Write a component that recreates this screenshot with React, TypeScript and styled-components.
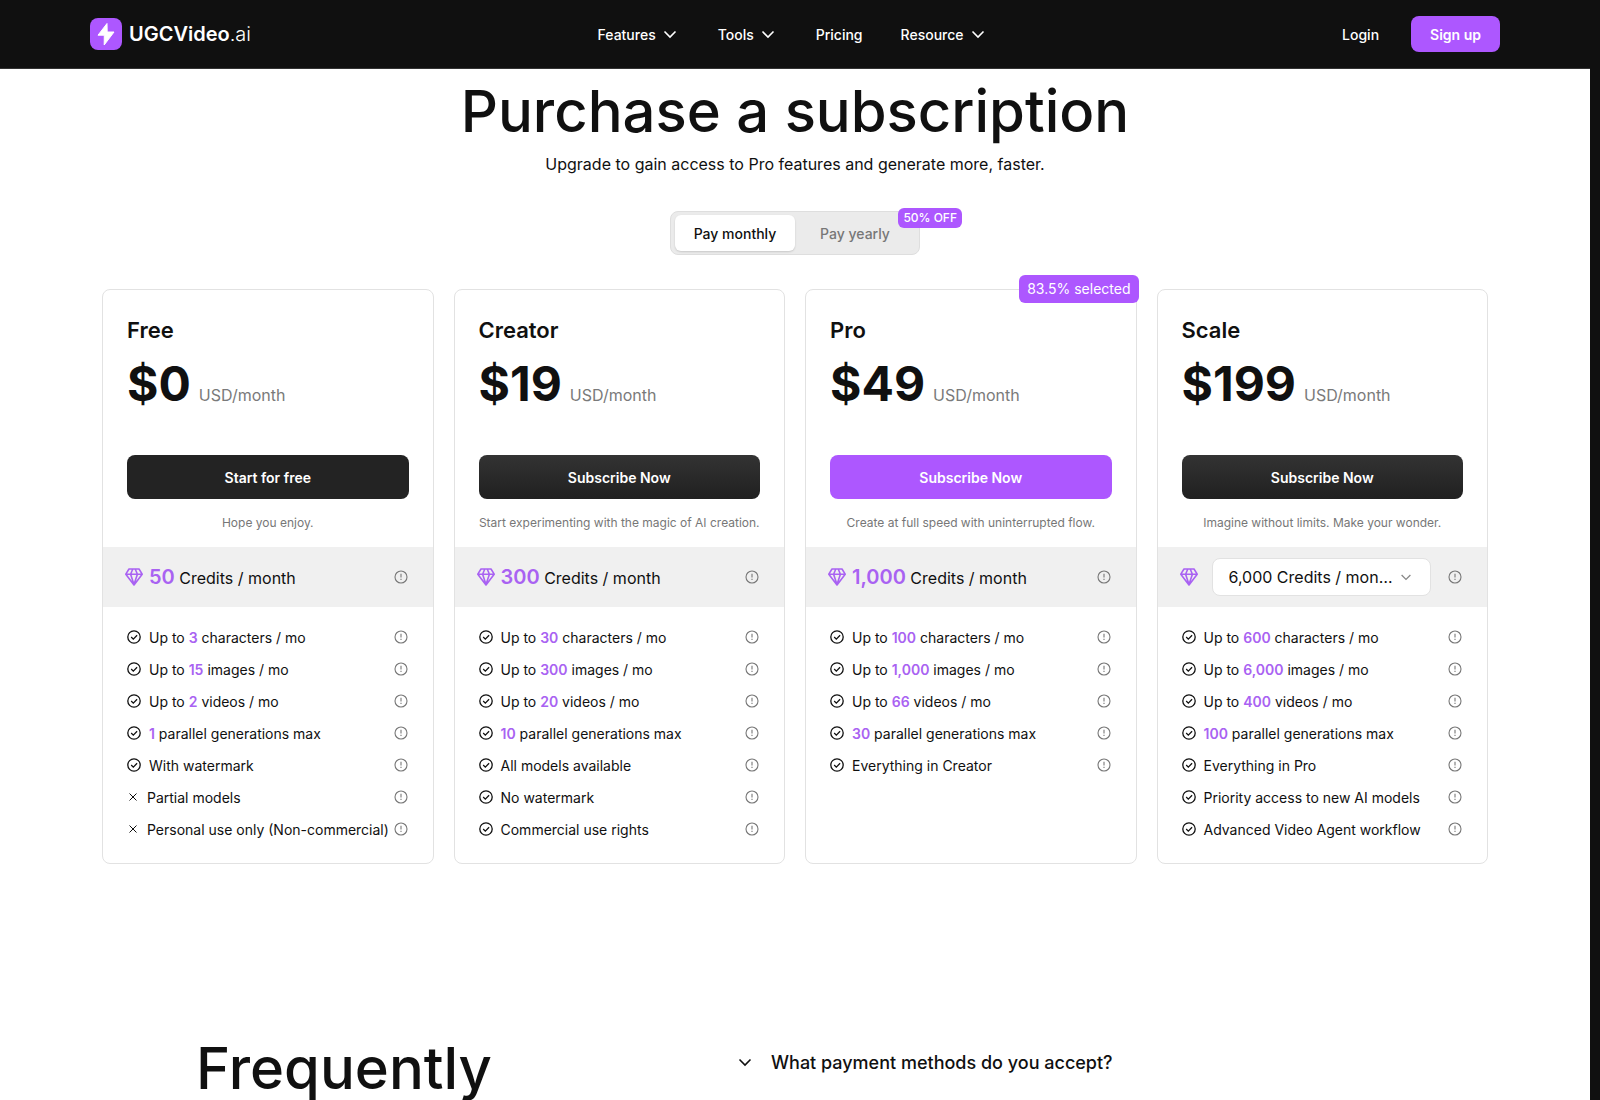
import React from "react";
import styled, { createGlobalStyle, css } from "styled-components";

const PURPLE = "#ad57ff";
const INK = "#101010";

const GlobalStyle = createGlobalStyle`
  *, *::before, *::after { box-sizing: border-box; }
  body {
    margin: 0;
    background: #101010;
    color: ${INK};
    font-family: Inter, "Liberation Sans", sans-serif;
    font-size: 14px;
  }
  button, select { font: inherit; color: inherit; }
  h1, h2, h3, p, ul { margin: 0; padding: 0; }
  svg { flex-shrink: 0; }
`;

const Shell = styled.div`
  height: 100vh;
  overflow: hidden;
  background: #fff;
  border-right: 10px solid #101010;
`;

const Header = styled.header`
  display: flex;
  align-items: center;
  justify-content: space-between;
  height: 69px;
  padding: 0 90px;
  background: #101010;
  border-bottom: 1px solid #333;
  color: #fff;
  font-size: 14px;
  font-weight: 500;
`;

const Logo = styled.a`
  display: flex;
  align-items: center;
  gap: 7px;
  color: #fff;
  text-decoration: none;
  font-size: 20px;
  font-weight: 600;
`;

const LogoSuffix = styled.span`
  font-weight: 300;
`;

const Nav = styled.nav`
  display: flex;
  align-items: center;
  gap: 38px;
`;

const NavLink = styled.a`
  color: #fff;
  text-decoration: none;
`;

const NavButton = styled.button`
  display: flex;
  align-items: center;
  gap: 4px;
  padding: 0;
  border: 0;
  background: none;
`;

const Account = styled.div`
  display: flex;
  align-items: center;
  gap: 32px;
  padding-left: 8px;
`;

const SignUp = styled.button`
  height: 36px;
  padding: 0 19px;
  border: 0;
  border-radius: 8px;
  background: ${PURPLE};
  font-weight: 600;
`;

const Intro = styled.section`
  display: flex;
  flex-direction: column;
  align-items: center;
  padding-top: 12px;
`;

const Title = styled.h1`
  font-size: 58px;
  line-height: 60px;
  font-weight: 500;
`;

const Subtitle = styled.p`
  margin-top: 11px;
  font-size: 16px;
  line-height: 24px;
`;

const Toggle = styled.div`
  position: relative;
  display: flex;
  margin-top: 35px;
  padding: 3px 4px;
  border: 1px solid #dedede;
  border-radius: 8px;
  background: #ebebeb;
`;

const ToggleButton = styled.button<{ $active?: boolean }>`
  width: 120px;
  height: 36px;
  border: 0;
  border-radius: 6px;
  background: none;
  color: #777;
  font-weight: 500;
  ${(p) =>
    p.$active &&
    css`
      background: #fff;
      color: ${INK};
      box-shadow: 0 1px 2px rgba(0, 0, 0, 0.15);
    `}
`;

const Discount = styled.span`
  position: absolute;
  top: -4px;
  right: -43px;
  padding: 0 5px;
  border-radius: 6px;
  background: ${PURPLE};
  color: #fff;
  font-size: 12px;
  line-height: 20px;
  font-weight: 500;
`;

const Plans = styled.section`
  display: grid;
  grid-template-columns: repeat(4, minmax(0, 1fr));
  gap: 20px;
  padding: 34px 102px 0;
`;

const Card = styled.article`
  position: relative;
  padding-bottom: 18px;
  border: 1px solid #e2e2e2;
  border-radius: 8px;
`;

const Popular = styled.span`
  position: absolute;
  top: -15px;
  right: -3px;
  padding: 0 8px;
  border-radius: 6px;
  background: ${PURPLE};
  color: #fff;
  font-size: 14px;
  line-height: 28px;
`;

const CardHead = styled.div`
  padding: 24px 24px 0;
`;

const PlanName = styled.h3`
  font-size: 22px;
  line-height: 32px;
  font-weight: 600;
`;

const Price = styled.p`
  display: flex;
  align-items: baseline;
  gap: 8px;
  margin-top: 8px;
  color: #7a7a7a;
  font-size: 16px;
  line-height: 60px;
`;

const Amount = styled.strong`
  color: ${INK};
  font-size: 48px;
  font-weight: 700;
`;

const Subscribe = styled.button<{ $tone: Tone }>`
  display: block;
  width: 100%;
  height: 44px;
  margin-top: 30px;
  border: 0;
  border-radius: 8px;
  color: #fff;
  font-weight: 600;
  background: ${(p) =>
    p.$tone === "purple" ? PURPLE : p.$tone === "flat" ? "#232323" : "linear-gradient(#333, #202020)"};
`;

const Note = styled.p`
  padding: 16px 0;
  color: #777;
  font-size: 12px;
  line-height: 16px;
  text-align: center;
`;

const Credits = styled.div`
  display: flex;
  align-items: center;
  gap: 6px;
  height: 60px;
  padding: 0 24px 0 22px;
  background: #f0f0f0;
`;

const CreditsText = styled.p`
  flex: 1;
  font-size: 16px;
`;

const CreditsCount = styled.strong`
  color: #a962f2;
  font-size: 20px;
  font-weight: 600;
`;

const SelectBox = styled.div`
  display: grid;
  grid-template-columns: 1fr 33px;
  align-items: center;
  flex: 1;
  margin: 0 10px 0 8px;
`;

const Select = styled.select`
  grid-area: 1 / 1 / 2 / 3;
  width: 100%;
  height: 38px;
  padding: 0 34px 0 16px;
  border: 1px solid #e2e2e2;
  border-radius: 8px;
  background: #fff;
  appearance: none;
  font-size: 16px;
  text-overflow: ellipsis;
  overflow: hidden;
  white-space: nowrap;
`;

const SelectArrow = styled.span`
  grid-area: 1 / 2;
  display: flex;
  z-index: 1;
  color: #888;
  pointer-events: none;
`;

const Features = styled.ul`
  padding: 14px 24px 0;
  list-style: none;
`;

const Feature = styled.li`
  display: flex;
  align-items: center;
  gap: 8px;
  height: 32px;
`;

const FeatureText = styled.span`
  flex: 1;
  min-width: 0;
  white-space: nowrap;
`;

const Count = styled.strong`
  color: #a962f2;
  font-weight: 600;
`;

const InfoButton = styled.button`
  display: flex;
  padding: 0;
  border: 0;
  background: none;
  color: #777;
`;

const Faq = styled.section`
  display: grid;
  grid-template-columns: 539px 1fr;
  padding: 174px 196px 0;
`;

const FaqTitle = styled.h2`
  font-size: 58px;
  line-height: 60px;
  font-weight: 500;
`;

const Question = styled.button`
  display: flex;
  align-items: center;
  gap: 16px;
  height: 48px;
  padding: 0;
  border: 0;
  background: none;
  font-size: 18px;
  font-weight: 500;
`;

const Chevron = ({ size = 20 }: { size?: number }) => (
  <svg width={size} height={size} viewBox="0 0 20 20" fill="none" stroke="currentColor" strokeWidth="1.6" aria-hidden="true">
    <path d="M4.500 7.500 10 13l5.500-5.500" />
  </svg>
);

const Bolt = () => (
  <svg width="32" height="32" viewBox="0 0 32 32" aria-hidden="true">
    <rect width="32" height="32" rx="8" fill={PURPLE} />
    <path d="M17 5.500 8 17.200h6.300L14.200 27 24 14h-6.800z" fill="#fff" stroke="#fff" strokeWidth="1" strokeLinejoin="round" />
  </svg>
);

const Diamond = () => (
  <svg width="18" height="18" viewBox="0 0 18 18" fill="none" stroke="#a962f2" strokeWidth="1.6" strokeLinejoin="round" aria-hidden="true">
    <path d="M4 1h10l3.200 5.200L9 17 .8 6.200zM.8 6.200h16.400M7.800 1 5.600 6.200 9 16.500l3.400-10.300L10.200 1" />
  </svg>
);

const Check = () => (
  <svg width="14" height="14" viewBox="0 0 14 14" fill="none" stroke={INK} strokeWidth="1.3" aria-hidden="true">
    <circle cx="7" cy="7" r="6.200" />
    <path d="m4.200 7 2.100 2.100 3.800-3.800" />
  </svg>
);

const Cross = () => (
  <svg width="12" height="12" viewBox="0 0 12 12" stroke={INK} strokeWidth="1" aria-hidden="true">
    <path d="m2.500 2.500 7 7m0-7-7 7" />
  </svg>
);

const Info = () => (
  <InfoButton aria-label="More information">
    <svg width="16" height="16" viewBox="0 0 16 16" fill="none" stroke="currentColor" strokeWidth="1.1" aria-hidden="true">
      <circle cx="8" cy="8" r="6" />
      <path d="M8 4.800v3.700M8 9.800v1.200" />
    </svg>
  </InfoButton>
);

type Tone = "flat" | "dark" | "purple";

interface Line {
  before?: string;
  count?: string;
  after?: string;
  excluded?: boolean;
}

interface Plan {
  name: string;
  price: string;
  action: string;
  tone: Tone;
  note: string;
  credits: string;
  selectable?: boolean;
  badge?: string;
  lines: Line[];
}

const quotas = (characters: string, images: string, videos: string, parallel: string): Line[] => [
  { before: "Up to ", count: characters, after: " characters / mo" },
  { before: "Up to ", count: images, after: " images / mo" },
  { before: "Up to ", count: videos, after: " videos / mo" },
  { count: parallel, after: " parallel generations max" },
];

const plans: Plan[] = [
  {
    name: "Free",
    price: "$0",
    action: "Start for free",
    tone: "flat",
    note: "Hope you enjoy.",
    credits: "50",
    lines: [
      ...quotas("3", "15", "2", "1"),
      { after: "With watermark" },
      { after: "Partial models", excluded: true },
      { after: "Personal use only (Non-commercial)", excluded: true },
    ],
  },
  {
    name: "Creator",
    price: "$19",
    action: "Subscribe Now",
    tone: "dark",
    note: "Start experimenting with the magic of AI creation.",
    credits: "300",
    lines: [
      ...quotas("30", "300", "20", "10"),
      { after: "All models available" },
      { after: "No watermark" },
      { after: "Commercial use rights" },
    ],
  },
  {
    name: "Pro",
    price: "$49",
    action: "Subscribe Now",
    tone: "purple",
    note: "Create at full speed with uninterrupted flow.",
    credits: "1,000",
    badge: "83.5% selected",
    lines: [...quotas("100", "1,000", "66", "30"), { after: "Everything in Creator" }],
  },
  {
    name: "Scale",
    price: "$199",
    action: "Subscribe Now",
    tone: "dark",
    note: "Imagine without limits. Make your wonder.",
    credits: "6,000",
    selectable: true,
    lines: [
      ...quotas("600", "6,000", "400", "100"),
      { after: "Everything in Pro" },
      { after: "Priority access to new AI models" },
      { after: "Advanced Video Agent workflow" },
    ],
  },
];

const PlanCard = ({ plan }: { plan: Plan }) => (
  <Card>
    {plan.badge && <Popular>{plan.badge}</Popular>}
    <CardHead>
      <PlanName>{plan.name}</PlanName>
      <Price>
        <Amount>{plan.price}</Amount>
        <span>USD/month</span>
      </Price>
      <Subscribe $tone={plan.tone}>{plan.action}</Subscribe>
      <Note>{plan.note}</Note>
    </CardHead>
    <Credits>
      <Diamond />
      {plan.selectable ? (
        <SelectBox>
          <Select aria-label="Credits per month">
            <option>{`${plan.credits} Credits / mon…`}</option>
          </Select>
          <SelectArrow>
            <Chevron size={16} />
          </SelectArrow>
        </SelectBox>
      ) : (
        <CreditsText>
          <CreditsCount>{plan.credits}</CreditsCount> Credits / month
        </CreditsText>
      )}
      <Info />
    </Credits>
    <Features>
      {plan.lines.map((line, i) => (
        <Feature key={i}>
          {line.excluded ? <Cross /> : <Check />}
          <FeatureText>
            {line.before}
            {line.count && <Count>{line.count}</Count>}
            {line.after}
          </FeatureText>
          <Info />
        </Feature>
      ))}
    </Features>
  </Card>
);

export default function App() {
  const [yearly, setYearly] = React.useState(false);
  return (
    <Shell>
      <GlobalStyle />
      <Header>
        <Logo href="#">
          <Bolt />
          <span>
            UGCVideo<LogoSuffix>.ai</LogoSuffix>
          </span>
        </Logo>
        <Nav>
          <NavButton>Features <Chevron /></NavButton>
          <NavButton>Tools <Chevron /></NavButton>
          <NavLink href="#">Pricing</NavLink>
          <NavButton>Resource <Chevron /></NavButton>
        </Nav>
        <Account>
          <NavLink href="#">Login</NavLink>
          <SignUp>Sign up</SignUp>
        </Account>
      </Header>
      <main>
        <Intro>
          <Title>Purchase a subscription</Title>
          <Subtitle>Upgrade to gain access to Pro features and generate more, faster.</Subtitle>
          <Toggle>
            <ToggleButton $active={!yearly} onClick={() => setYearly(false)}>Pay monthly</ToggleButton>
            <ToggleButton $active={yearly} onClick={() => setYearly(true)}>Pay yearly</ToggleButton>
            <Discount>50% OFF</Discount>
          </Toggle>
        </Intro>
        <Plans>
          {plans.map((plan) => (
            <PlanCard key={plan.name} plan={plan} />
          ))}
        </Plans>
        <Faq>
          <FaqTitle>Frequently</FaqTitle>
          <Question>
            <Chevron />
            What payment methods do you accept?
          </Question>
        </Faq>
      </main>
    </Shell>
  );
}
